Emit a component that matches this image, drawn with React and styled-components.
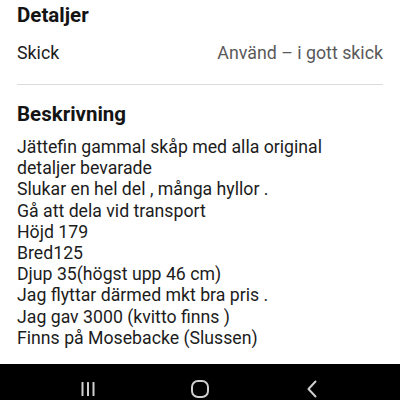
import React from 'react'
import styled, { createGlobalStyle } from 'styled-components';

const GlobalStyle = createGlobalStyle`
  html, body {
    margin: 0;
    padding: 0;
    background: #fff;
    overflow: hidden;
  }
  body {
    font-family: Roboto, "Noto Sans", "Liberation Sans", sans-serif;
    -webkit-font-smoothing: antialiased;
  }
`;

const Screen = styled.div`
  width: 400px;
  height: 400px;
  overflow: hidden;
  display: flex;
  flex-direction: column;
  background: #fff;
`;

const Content = styled.div`
  flex: 1;
  padding: 3px 17px 0 17px;
  color: #1c1c1c;
`;

const Heading = styled.h2`
  margin: 0;
  font-size: 20.5px;
  line-height: 24px;
  font-weight: 700;
  color: #141414;
`;

const DetailRow = styled.div`
  display: flex;
  justify-content: space-between;
  align-items: baseline;
  margin-top: 15px;
  padding-bottom: 20px;
  border-bottom: 1px solid #dcdcdc;
  font-size: 17.8px;
  line-height: 22px;
`;

const Label = styled.span`
  color: #1c1c1c;
`;

const Value = styled.span`
  color: #595959;
`;

const Section = styled.section`
  padding-top: 17px;
`;

const Description = styled.p`
  margin: 11px 0 0 0;
  font-size: 17.7px;
  line-height: 21.2px;
  color: #1c1c1c;
`;

const NavBar = styled.nav`
  flex: 0 0 36px;
  height: 36px;
  box-sizing: border-box;
  padding: 14px 32px 0 32px;
  background: #000;
  display: grid;
  grid-template-columns: repeat(3, 1fr);
  align-items: center;
  justify-items: center;
  color: #cfcfcf;
`;

const NavButton = styled.button`
  all: unset;
  display: flex;
  align-items: center;
  justify-content: center;
  width: 40px;
  height: 22px;
`;

const lines = [
  'Jättefin gammal skåp med alla original',
  'detaljer bevarade',
  'Slukar en hel del , många hyllor .',
  'Gå att dela vid transport',
  'Höjd 179',
  'Bred125',
  'Djup 35(högst upp 46 cm)',
  'Jag flyttar därmed mkt bra pris .',
  'Jag gav 3000 (kvitto finns )',
  'Finns på Mosebacke (Slussen)',
];

const RecentsIcon = () => (
  <svg width="16" height="16" viewBox="0 0 16 16" fill="currentColor">
    <rect x="1.5" y="1" width="2" height="14" rx="0.5" />
    <rect x="7" y="1" width="2" height="14" rx="0.5" />
    <rect x="12.5" y="1" width="2" height="14" rx="0.5" />
  </svg>
);

const HomeIcon = () => (
  <svg width="18" height="18" viewBox="0 0 18 18" fill="none" stroke="currentColor" strokeWidth="2">
    <rect x="1" y="1" width="16" height="16" rx="6" />
  </svg>
);

const BackIcon = () => (
  <svg width="12" height="18" viewBox="0 0 12 18" fill="none" stroke="currentColor" strokeWidth="2" strokeLinecap="round" strokeLinejoin="round">
    <polyline points="9.5,1.5 2.5,9 9.5,16.5" />
  </svg>
);

const App = () => {
  return (
    <Screen>
      <GlobalStyle />
      <Content>
        <Heading>Detaljer</Heading>
        <DetailRow>
          <Label>Skick</Label>
          <Value>Använd – i gott skick</Value>
        </DetailRow>
        <Section>
          <Heading>Beskrivning</Heading>
          <Description>
            {lines.map((line, i) => (
              <React.Fragment key={i}>
                {line}
                {i < lines.length - 1 ? <br /> : null}
              </React.Fragment>
            ))}
          </Description>
        </Section>
      </Content>
      <NavBar>
        <NavButton><RecentsIcon /></NavButton>
        <NavButton><HomeIcon /></NavButton>
        <NavButton><BackIcon /></NavButton>
      </NavBar>
    </Screen>
  );
};

export default App
